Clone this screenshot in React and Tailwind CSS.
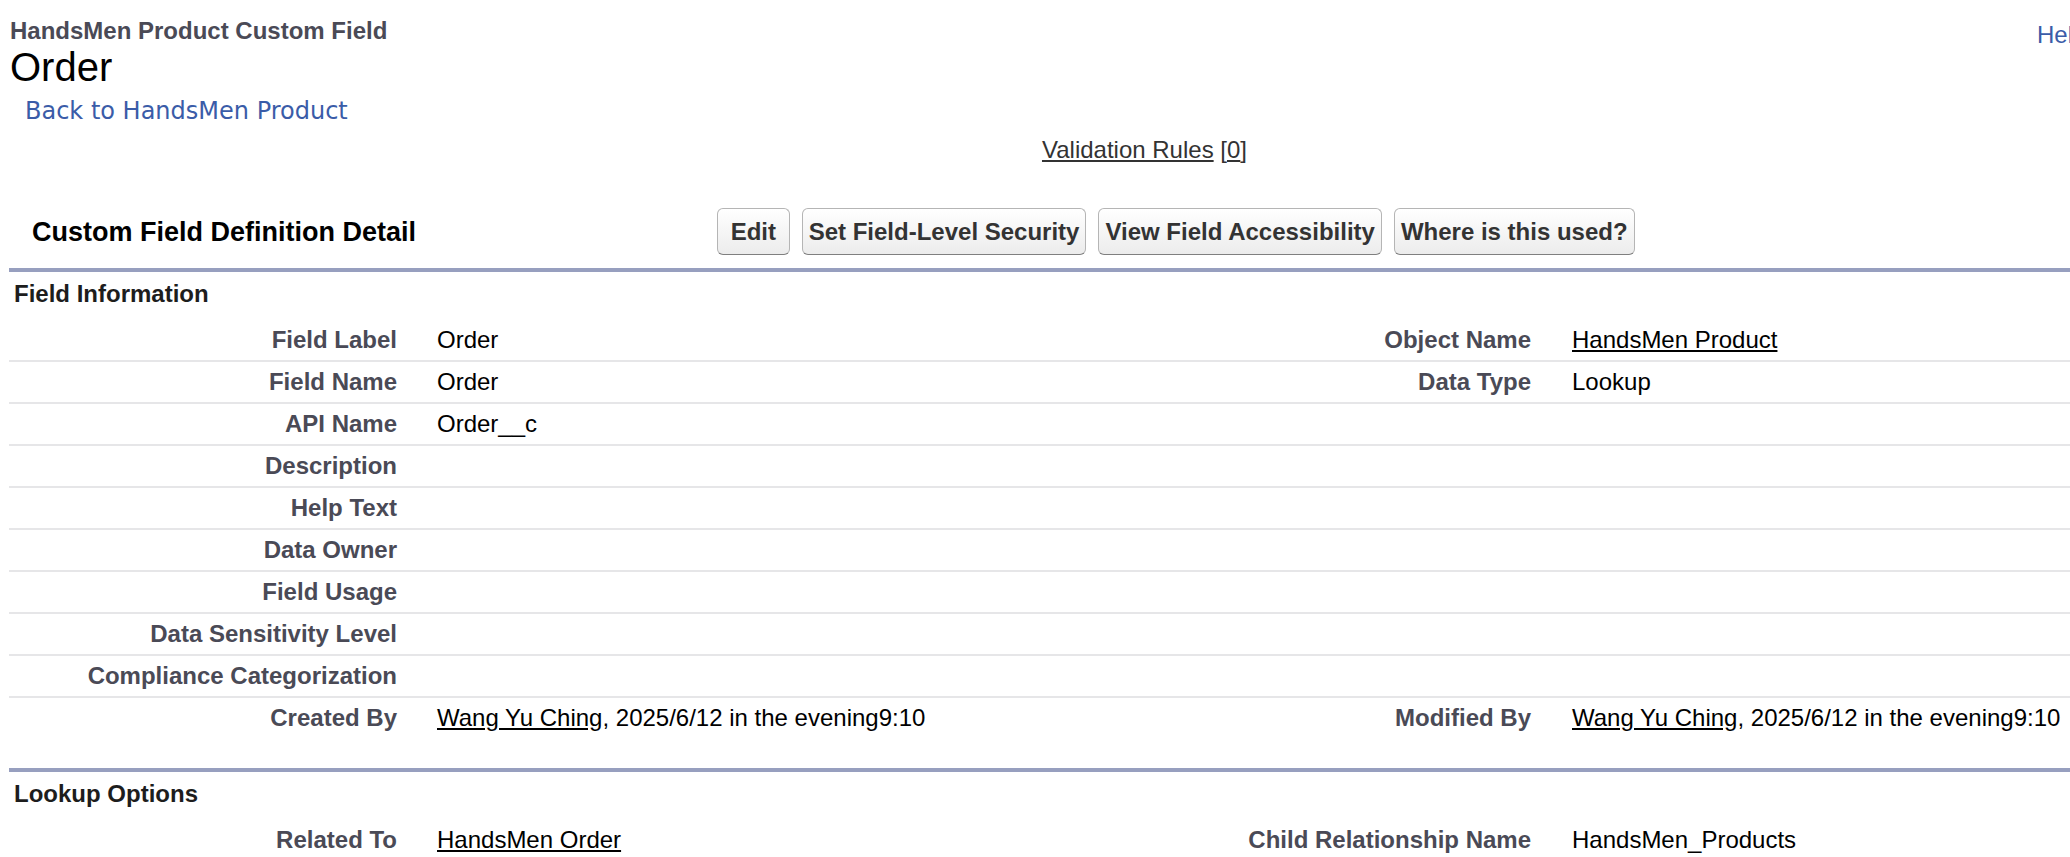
const fieldRows = [
  ["Field Label", "Order", "Object Name", <a className="underline">HandsMen Product</a>],
  ["Field Name", "Order", "Data Type", "Lookup"],
  ["API Name", "Order__c", "", ""],
  ["Description", "", "", ""],
  ["Help Text", "", "", ""],
  ["Data Owner", "", "", ""],
  ["Field Usage", "", "", ""],
  ["Data Sensitivity Level", "", "", ""],
  ["Compliance Categorization", "", "", ""],
  [
    "Created By",
    <>
      <a className="underline">Wang Yu Ching</a>, 2025/6/12 in the evening9:10
    </>,
    "Modified By",
    <>
      <a className="underline">Wang Yu Ching</a>, 2025/6/12 in the evening9:10
    </>,
  ],
];

const lookupRows = [
  ["Related To", <a className="underline">HandsMen Order</a>, "Child Relationship Name", "HandsMen_Products"],
];

const buttons = [" Edit ", "Set Field-Level Security", "View Field Accessibility", "Where is this used?"];

function Rows({ rows }) {
  return (
    <div className="grid grid-cols-[408px_726px_408px_726px]">
      {rows.map((r, i) => {
        const line = i === rows.length - 1 ? "border-transparent" : "border-[#e6e6e8]";
        return [
          <div key={i + "a"} className={"whitespace-nowrap border-b-2 py-[6px] pr-[20px] text-right font-bold text-[#4a4a56] " + line}>
            {r[0]}
          </div>,
          <div key={i + "b"} className={"whitespace-nowrap border-b-2 py-[6px] pl-[20px] " + line}>
            {r[1]}
          </div>,
          <div key={i + "c"} className={"whitespace-nowrap border-b-2 py-[6px] pr-[20px] text-right font-bold text-[#4a4a56] " + line}>
            {r[2]}
          </div>,
          <div key={i + "d"} className={"whitespace-nowrap border-b-2 py-[6px] pl-[21px] " + line}>
            {r[3]}
          </div>,
        ];
      })}
    </div>
  );
}

function Section({ title, rows, className }) {
  return (
    <div className={"ml-[9px] w-[2268px] border-t-4 border-[#979fbf] " + className}>
      <h3 className="pb-[12px] pl-[5px] pt-[8px] font-bold text-[#1d1d1d]">{title}</h3>
      <Rows rows={rows} />
    </div>
  );
}

export default function App() {
  return (
    <div className="h-[857px] w-[2070px] overflow-hidden bg-white font-['Liberation_Sans',Arial,sans-serif] text-[24px] leading-[28px] text-black">
      <div className="w-[2289px]">
        <div className="flex">
          <div className="flex-1 pl-[10px] pt-[17px]">
            <h1 className="font-bold text-[#4a4a56]">HandsMen Product Custom Field</h1>
            <h2 className="text-[40px] leading-[44px]">Order</h2>
          </div>
          <div className="w-[252px] pt-[21px]">
            <a className="whitespace-nowrap text-[#3a5ca8]">Help for this Page</a>
          </div>
        </div>

        <div className="mt-[8px] pl-[25px] font-['DejaVu_Sans',Verdana,sans-serif] text-[#3a5ca8]">
          <a>Back to HandsMen Product</a>
        </div>

        <div className="mt-[11px] text-center text-[#333]">
          <a className="underline">Validation Rules</a> [<a className="underline">0</a>]
        </div>

        <div className="ml-[9px] mt-[44px] flex h-[47px] w-[2268px] items-center">
          <h2 className="w-[708px] pl-[23px] text-[27px] font-bold leading-[30px]">
            Custom Field Definition Detail
          </h2>
          <div className="flex gap-[12px]">
            {buttons.map((b) => (
              <button
                key={b}
                className="h-[47px] whitespace-pre rounded-[6px] border border-[#b5b5b5] border-b-[#7f7f7f] bg-linear-to-b from-white to-[#ececec] px-[6px] font-bold text-[#333]"
              >
                {b}
              </button>
            ))}
          </div>
        </div>

        <Section title="Field Information" rows={fieldRows} className="mt-[13px]" />
        <Section title="Lookup Options" rows={lookupRows} className="mt-[28px]" />
      </div>
    </div>
  );
}
